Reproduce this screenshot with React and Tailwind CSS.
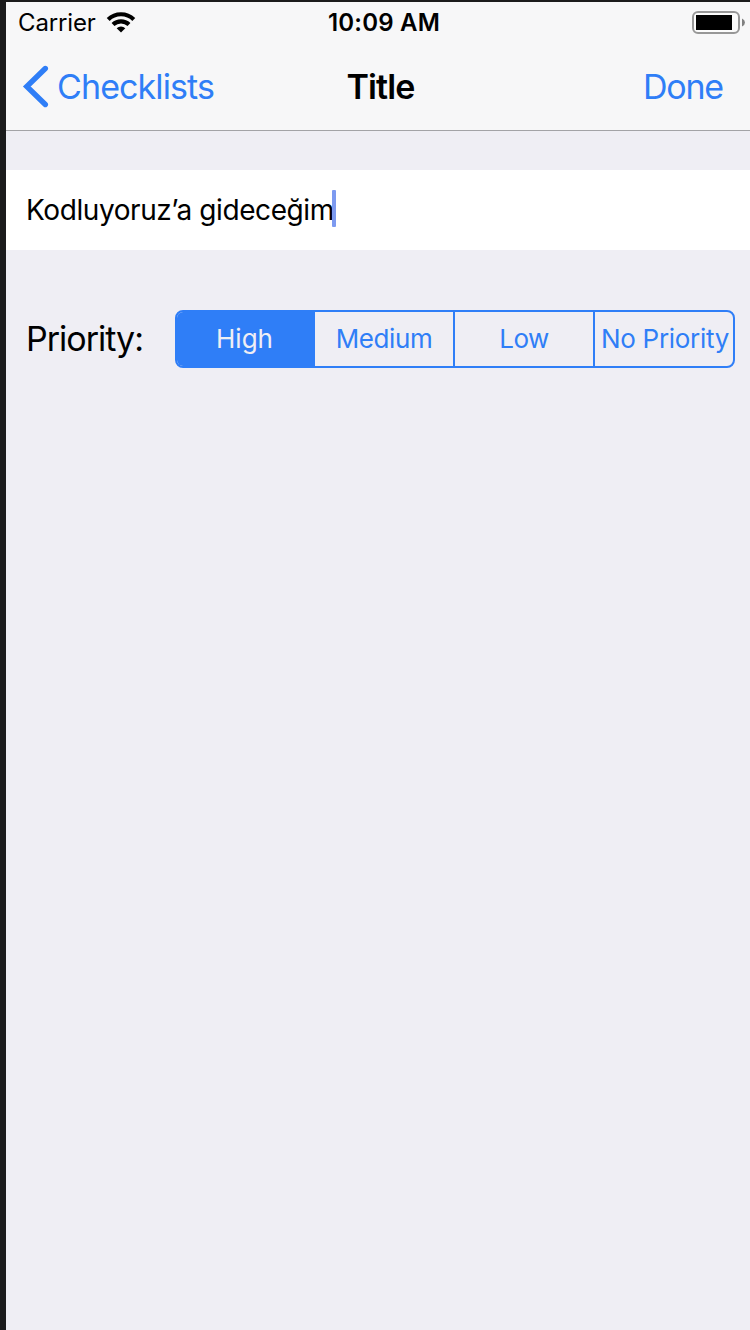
import React from "react";

function WifiIcon() {
  return (
    <svg className="-mt-[2px] ml-[10px] h-[21px] w-[30px]" viewBox="0 0 30 21" aria-hidden="true">
      <g fill="none" stroke="#000" strokeWidth="4.2">
        <path d="M2.2 7.4 A18.5 18.5 0 0 1 27.8 7.4" />
        <path d="M7 12.5 A11.8 11.8 0 0 1 23 12.5" />
      </g>
      <path d="M10.7 16.2 A6.2 6.2 0 0 1 19.3 16.2 L15 20.6 Z" fill="#000" />
    </svg>
  );
}

function BatteryIcon() {
  return (
    <svg className="h-6 w-[54px]" viewBox="0 0 54 24" aria-hidden="true">
      <rect x="1" y="1" width="46" height="21" rx="5" fill="#fbfbfb" stroke="#979797" strokeWidth="2" />
      <rect x="4" y="4" width="36" height="15" fill="#000" />
      <path d="M50 7.5 Q53 9 53 11.5 Q53 14 50 15.5 Z" fill="#808080" />
    </svg>
  );
}

function StatusBar() {
  return (
    <div className="grid h-[42px] grid-cols-[250px_256px_1fr] items-center">
      <div className="flex items-center pl-3">
        <span className="text-[24px] leading-[42px] tracking-[-0.15px]">Carrier</span>
        <WifiIcon />
      </div>
      <span className="text-center text-[24px] leading-[42px] font-semibold tracking-[0.2px]">10:09 AM</span>
      <div className="flex justify-end pr-1">
        <BatteryIcon />
      </div>
    </div>
  );
}

function NavBar() {
  return (
    <div className="grid h-[86px] grid-cols-[250px_249px_1fr] items-center text-[34px] leading-[84px]">
      <button className="flex items-center pl-4 text-[#2f7ef7]">
        <svg className="h-[44px] w-[28px]" viewBox="0 0 28 44" aria-hidden="true">
          <path d="M23.3 3.5 L4.8 21.5 L23.3 39.5" fill="none" stroke="currentColor" strokeWidth="5.4" strokeLinecap="round" />
        </svg>
        <span className="ml-[7px] tracking-[-0.9px]">Checklists</span>
      </button>
      <h1 className="text-center font-semibold tracking-[-0.9px]">Title</h1>
      <button className="pr-[27px] text-right tracking-[-1.2px] text-[#2f7ef7]">Done</button>
    </div>
  );
}

function PriorityControl() {
  return (
    <div className="flex h-[58px] w-[560px] overflow-hidden rounded-[8px] border-2 border-[#2f7ef7] text-[26px] leading-[54px] text-[#2f7ef7]">
      <button className="w-[138px] bg-[#2f7ef7] pr-[3px] text-[#efeef4]">High</button>
      <button className="w-[140px] border-r-2 border-[#2f7ef7] tracking-[-0.4px]">Medium</button>
      <button className="w-[140px] border-r-2 border-[#2f7ef7] tracking-[-0.6px]">Low</button>
      <button className="w-[138px] pl-[2px] tracking-[-0.3px] whitespace-nowrap">No Priority</button>
    </div>
  );
}

export default function App() {
  return (
    <div className="h-[1330px] w-[750px] overflow-hidden bg-[#1b1b1c] pt-[2px] pl-[6px] font-['Inter',sans-serif] text-black">
      <main className="h-full bg-[#efeef4]">
        <header className="h-[129px] border-b border-[#a3a3a6] bg-[#f7f7f8]">
          <StatusBar />
          <NavBar />
        </header>
        <div className="mt-[39px] flex h-[80px] items-center bg-white pl-5">
          <span className="text-[28px] tracking-[-0.42px]">Kodluyoruz’a gideceğim</span>
          <span className="mb-[3px] -ml-[2px] h-[37px] w-1 rounded-[1px] bg-[#7d9af0]" />
        </div>
        <div className="mt-[60px] flex items-center pl-5">
          <span className="w-[149px] text-[34px] leading-[58px] tracking-[-1px]">Priority:</span>
          <PriorityControl />
        </div>
      </main>
    </div>
  );
}
